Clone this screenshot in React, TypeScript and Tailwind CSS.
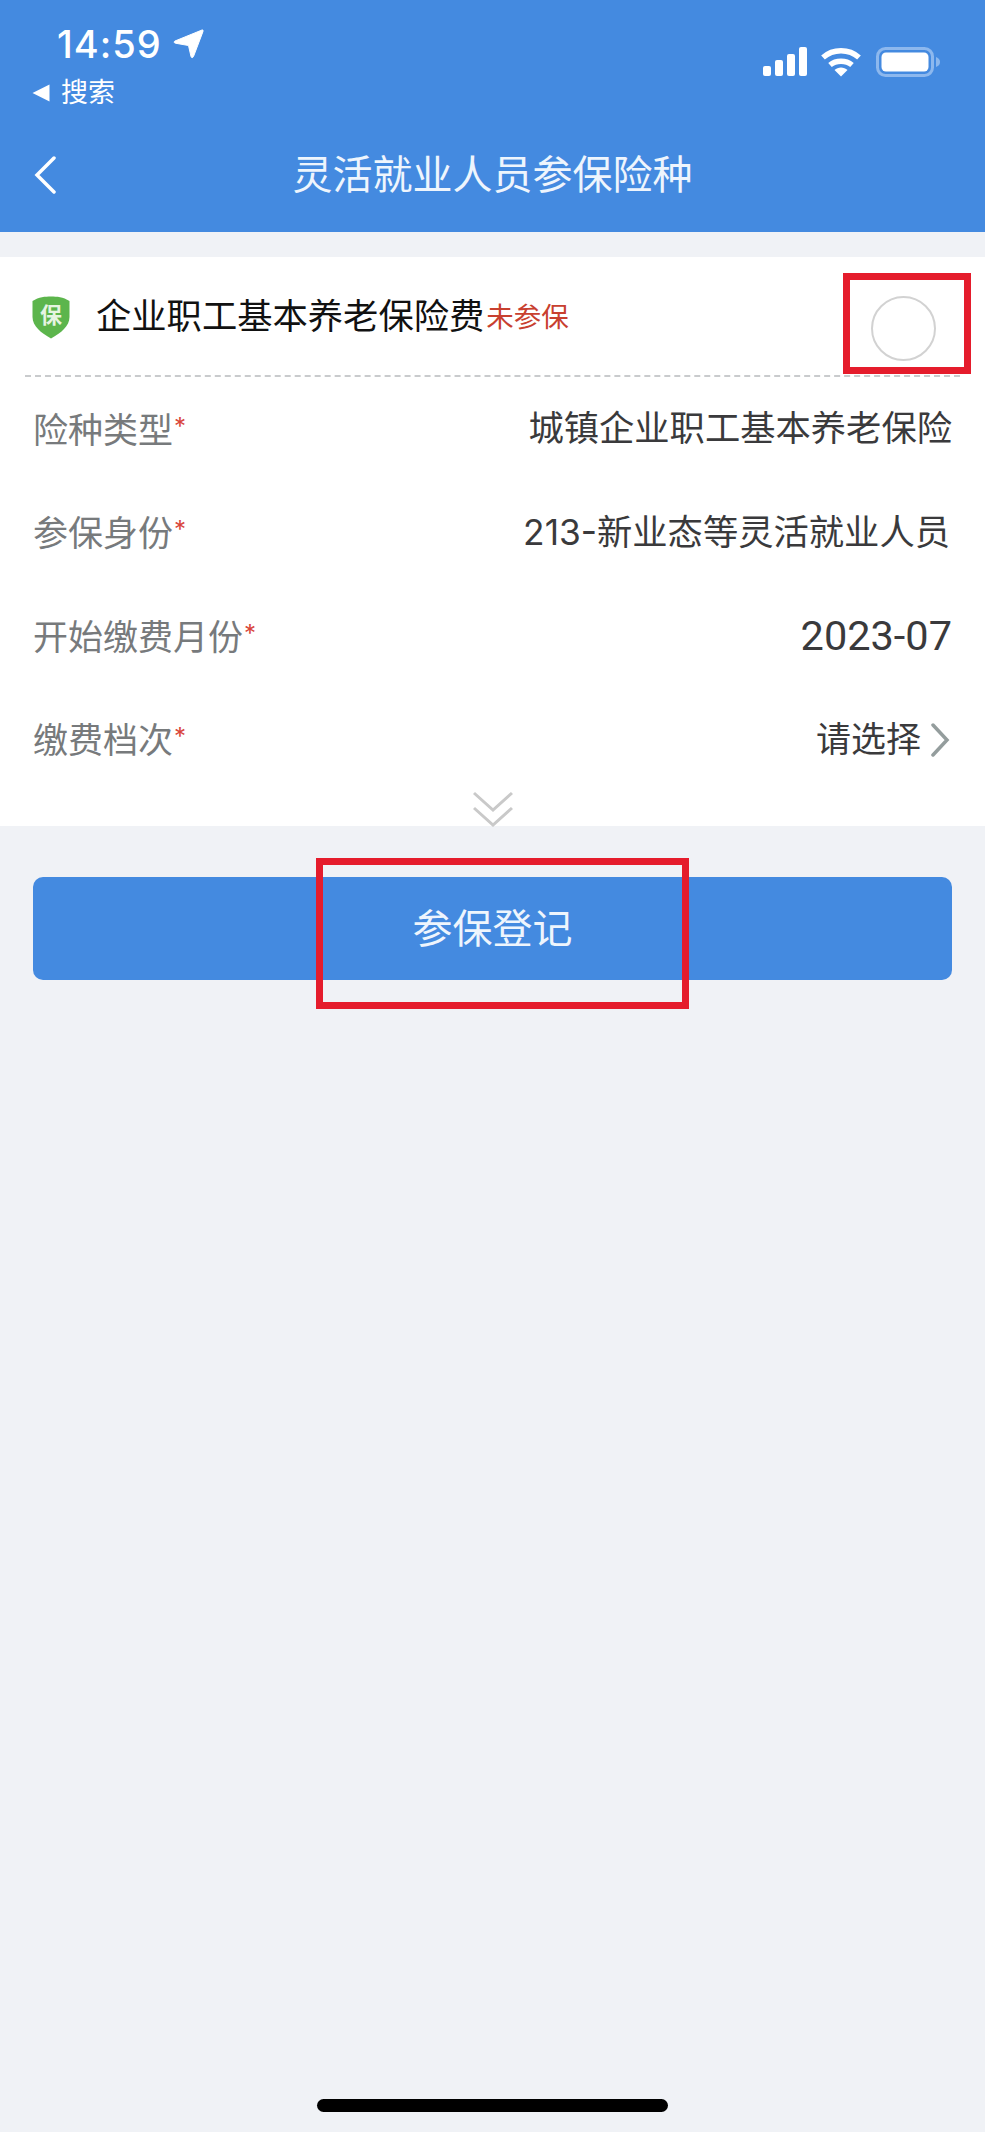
const font = { fontFamily: '"Inter", "Noto Sans CJK SC", sans-serif' };

function Star() {
  return <span className="text-[#d9463b] text-[24px] leading-none self-start mt-[7px] ml-[1px]">*</span>;
}

function Row({ label, value, height }: { label: string; value: React.ReactNode; height: string }) {
  return (
    <div className={`flex items-center justify-between pl-[33px] pr-[33px] ${height}`}>
      <div className="flex items-start text-[35px] leading-[44px] text-[#777a7c]">
        {label}
        <Star />
      </div>
      {value}
    </div>
  );
}

function Signal() {
  return (
    <svg width="44" height="29" viewBox="0 0 44 29" fill="#fff">
      <rect x="0" y="19" width="8" height="10" rx="2" />
      <rect x="12" y="13" width="8" height="16" rx="2" />
      <rect x="24" y="7" width="8" height="22" rx="2" />
      <rect x="36" y="0" width="8" height="29" rx="2" />
    </svg>
  );
}

function Wifi() {
  return (
    <svg width="42" height="30" viewBox="0 0 42 30" fill="none" stroke="#fff" strokeWidth="5.5">
      <path d="M3 10.5 C13 1.5 29 1.5 39 10.5" />
      <path d="M10 18 C16 13 26 13 32 18" />
      <path d="M14.5 23 L21 29.5 L27.5 23 C24 19.5 18 19.5 14.5 23 Z" fill="#fff" stroke="none" />
    </svg>
  );
}

function Battery() {
  return (
    <svg width="65" height="30" viewBox="0 0 65 30">
      <rect x="1.5" y="1.5" width="55" height="27" rx="8" fill="none" stroke="#8db8ee" strokeWidth="3" />
      <rect x="5.5" y="5.5" width="47" height="19" rx="4.5" fill="#fff" />
      <path d="M60 10 C63 11 64 13 64 15 C64 17 63 19 60 20 Z" fill="#8db8ee" />
    </svg>
  );
}

function Shield() {
  return (
    <div className="relative w-[38px] h-[43px] flex items-center justify-center">
      <svg className="absolute inset-0" width="38" height="43" viewBox="0 0 38 43">
        <path
          d="M0.5 5 C7 1 13 0.5 19 0.5 C25 0.5 31 1 37.5 5 L37.5 21 C37.5 30 29 37 19 42.5 C9 37 0.5 30 0.5 21 Z"
          fill="#5cb54c"
        />
      </svg>
      <span className="relative text-[22px] leading-none font-bold text-[#e6f4e2] -mt-[4px]">保</span>
    </div>
  );
}

export default function App() {
  return (
    <div style={font} className="min-h-[2132px] bg-[#f0f2f6] flex flex-col">
      <header className="h-[232px] bg-[#448ae0] text-white flex flex-col">
        <div className="h-[150px] flex justify-between pl-[32px] pr-[44px]">
          <div className="flex flex-col">
            <div className="flex items-center pl-[25px] pt-[21px] gap-[11px]">
              <span className="text-[38px] leading-[46px] font-medium tracking-[1px]">14:59</span>
              <svg width="31" height="30" viewBox="0 0 31 30" fill="#fff" stroke="#fff" strokeWidth="1" strokeLinejoin="round">
                <path d="M29 1 C30 0.8 30.4 1.4 30 2.4 L20.5 27.5 C19.8 29 18.4 29 18 27.5 L15.5 16.5 L2.4 14.2 C0.8 13.8 0.8 12.6 2 12 Z" />
              </svg>
            </div>
            <div className="flex items-center gap-[11px] mt-[8px]">
              <svg width="18" height="18" viewBox="0 0 18 18" fill="#fff">
                <path d="M17.5 0.5 L17.5 17.5 L0.5 9 Z" />
              </svg>
              <span className="text-[27px] leading-[36px]">搜索</span>
            </div>
          </div>
          <div className="flex gap-[13px] pt-[47px] h-fit">
            <Signal />
            <Wifi />
            <div className="ml-[1px]">
              <Battery />
            </div>
          </div>
        </div>
        <div className="relative flex items-center justify-center h-[50px]">
          <svg className="absolute left-[34px] top-[6px]" width="22" height="38" viewBox="0 0 22 38" fill="none" stroke="#fff" strokeWidth="3.5" strokeLinecap="round">
            <path d="M20 2 L3 19 L20 36" />
          </svg>
          <span className="text-[40px] leading-[50px] text-[#eef5fd]">灵活就业人员参保险种</span>
        </div>
      </header>

      <section className="mt-[25px] bg-white h-[569px] relative">
        <div className="relative h-[118px] flex items-center pl-[32px] pt-[2px]">
          <Shield />
          <span className="ml-[26px] text-[35.3px] leading-[44px] text-[#111]">企业职工基本养老保险费</span>
          <span className="ml-[2px] text-[27.5px] leading-[44px] text-[#c8402f]">未参保</span>
          <div className="self-start ml-auto mr-[49px] mt-[37px] w-[65px] h-[65px] rounded-full border-2 border-[#d2d2d2]" />
          {/* annotation frame round the selector */}
          <div className="absolute left-[843px] top-[16px] w-[128px] h-[101px] border-[7px] border-[#e51c2c]" />
        </div>
        <div className="mx-[25px] border-t-2 border-dashed border-[#c9cbcd]" />
        <div className="pt-[1px]">
          <Row label="险种类型" height="h-[103px]" value={<span className="text-[35.3px] text-[#3a3a3c]">城镇企业职工基本养老保险</span>} />
          <Row label="参保身份" height="h-[104px]" value={<span className="text-[35.3px] text-[#3a3a3c] mr-[2px]">213-新业态等灵活就业人员</span>} />
          <Row label="开始缴费月份" height="h-[103px]" value={<span className="text-[41.5px] text-[#3a3a3c] font-['Roboto']">2023-07</span>} />
          <Row
            label="缴费档次"
            height="h-[103px]"
            value={
              <div className="flex items-center gap-[9px] mr-[2px]">
                <span className="text-[35px] text-[#3a3a3c]">请选择</span>
                <svg width="20" height="34" viewBox="0 0 20 34" fill="none" stroke="#949d9d" strokeWidth="3.5" strokeLinecap="round">
                  <path d="M3 2 L17 17 L3 32" />
                </svg>
              </div>
            }
          />
        </div>
        <div className="flex justify-center">
          <svg width="40" height="36" viewBox="0 0 40 36" fill="none" stroke="#c9c9c9" strokeWidth="3">
            <path d="M1 2 L20 19 L39 2" />
            <path d="M1 17 L20 34 L39 17" />
          </svg>
        </div>
      </section>

      <div className="px-[33px] pt-[51px]">
        <div className="relative h-[103px] rounded-[10px] bg-[#448ae0] flex items-center justify-center">
          <span className="text-[40px] text-[#eef5fd]">参保登记</span>
          {/* annotation frame round the button caption */}
          <div className="absolute left-[283px] top-[-19px] w-[373px] h-[151px] border-[7px] border-[#e51c2c]" />
        </div>
      </div>

      <div className="mt-auto pb-[20px] flex justify-center">
        <div className="w-[351px] h-[13px] rounded-full bg-black" />
      </div>
    </div>
  );
}
